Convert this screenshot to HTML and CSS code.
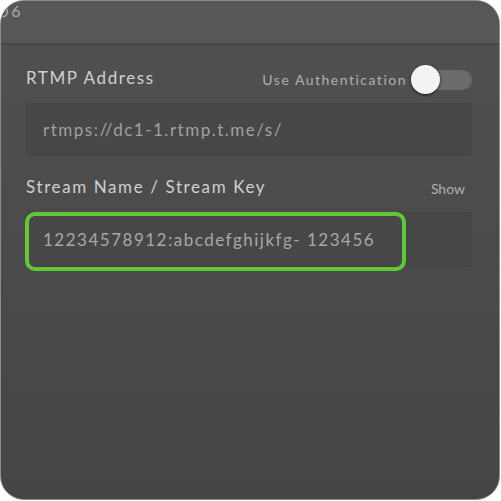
FILE: index.html
```html
<!DOCTYPE html>
<html>
<head>
<meta charset="utf-8">
<link rel="stylesheet" href="styles.css">
</head>
<body>
<div class="card">
  <div class="header"><span class="title">06</span></div>
  <div class="content">
    <div class="row row-first">
      <span class="label">RTMP Address</span>
      <div class="auth">
        <span class="auth-label">Use Authentication</span>
        <span class="toggle"><span class="knob"></span></span>
      </div>
    </div>
    <div class="field field-url">rtmps://dc1-1.rtmp.t.me/s/</div>
    <div class="row row-second">
      <span class="label">Stream Name / Stream Key</span>
      <span class="show">Show</span>
    </div>
    <div class="field field-key">
      12234578912:abcdefghijkfg- 123456
      <span class="highlight"></span>
    </div>
  </div>
</div>
</body>
</html>
```
FILE: styles.css
```css
html, body {
  margin: 0;
  padding: 0;
  background: #ffffff;
}
.card {
  box-sizing: border-box;
  width: 500px;
  height: 500px;
  border: 1px solid #8c8c8c;
  border-radius: 24px;
  overflow: hidden;
  background: linear-gradient(#515151, #454545);
  font-family: Lato, "Open Sans", sans-serif;
}
.header {
  height: 42px;
  background: #575757;
  border-bottom: 2px solid #474747;
}
.title {
  display: block;
  margin-left: -2px;
  padding-top: 0;
  font-size: 16px;
  color: #a8a8a8;
  letter-spacing: 3px;
}
.content {
  padding: 16px 27px 0 25px;
}
.row {
  display: flex;
  justify-content: space-between;
  align-items: center;
}
.row-first {
  height: 32px;
}
.label {
  font-size: 17px;
  color: #d0d0d0;
  letter-spacing: 1.6px;
}
.auth {
  display: flex;
  align-items: center;
  margin-top: 5px;
}
.auth-label {
  font-size: 14px;
  color: #b0b0b0;
  letter-spacing: 1.5px;
  margin-right: 5px;
}
.toggle {
  position: relative;
  display: block;
  width: 60px;
  height: 20px;
  border-radius: 10px;
  background: #6b6b6b;
}
.knob {
  position: absolute;
  left: -1px;
  top: -5px;
  width: 29px;
  height: 29px;
  border-radius: 50%;
  background: #f3f3f3;
  box-shadow: 0 1px 3px rgba(0, 0, 0, 0.7);
}
.field {
  position: relative;
  box-sizing: border-box;
  background: #474747;
  border: 1px solid #424242;
  border-radius: 3px;
  padding-left: 16px;
  font-size: 17px;
  color: #a0a0a0;
  letter-spacing: 1.5px;
  display: flex;
  align-items: center;
}
.field-url {
  margin-top: 10px;
  height: 53px;
}
.row-second {
  margin-top: 17px;
  height: 26px;
}
.show {
  font-size: 14px;
  color: #b0b0b0;
  margin-right: 7px;
  margin-top: 4px;
}
.field-key {
  margin-top: 13px;
  height: 55px;
  color: #a8a8a8;
}
.highlight {
  position: absolute;
  left: -2px;
  top: -1px;
  width: 381px;
  height: 59px;
  box-sizing: border-box;
  border: 4px solid #62c834;
  border-radius: 10px;
}
```
